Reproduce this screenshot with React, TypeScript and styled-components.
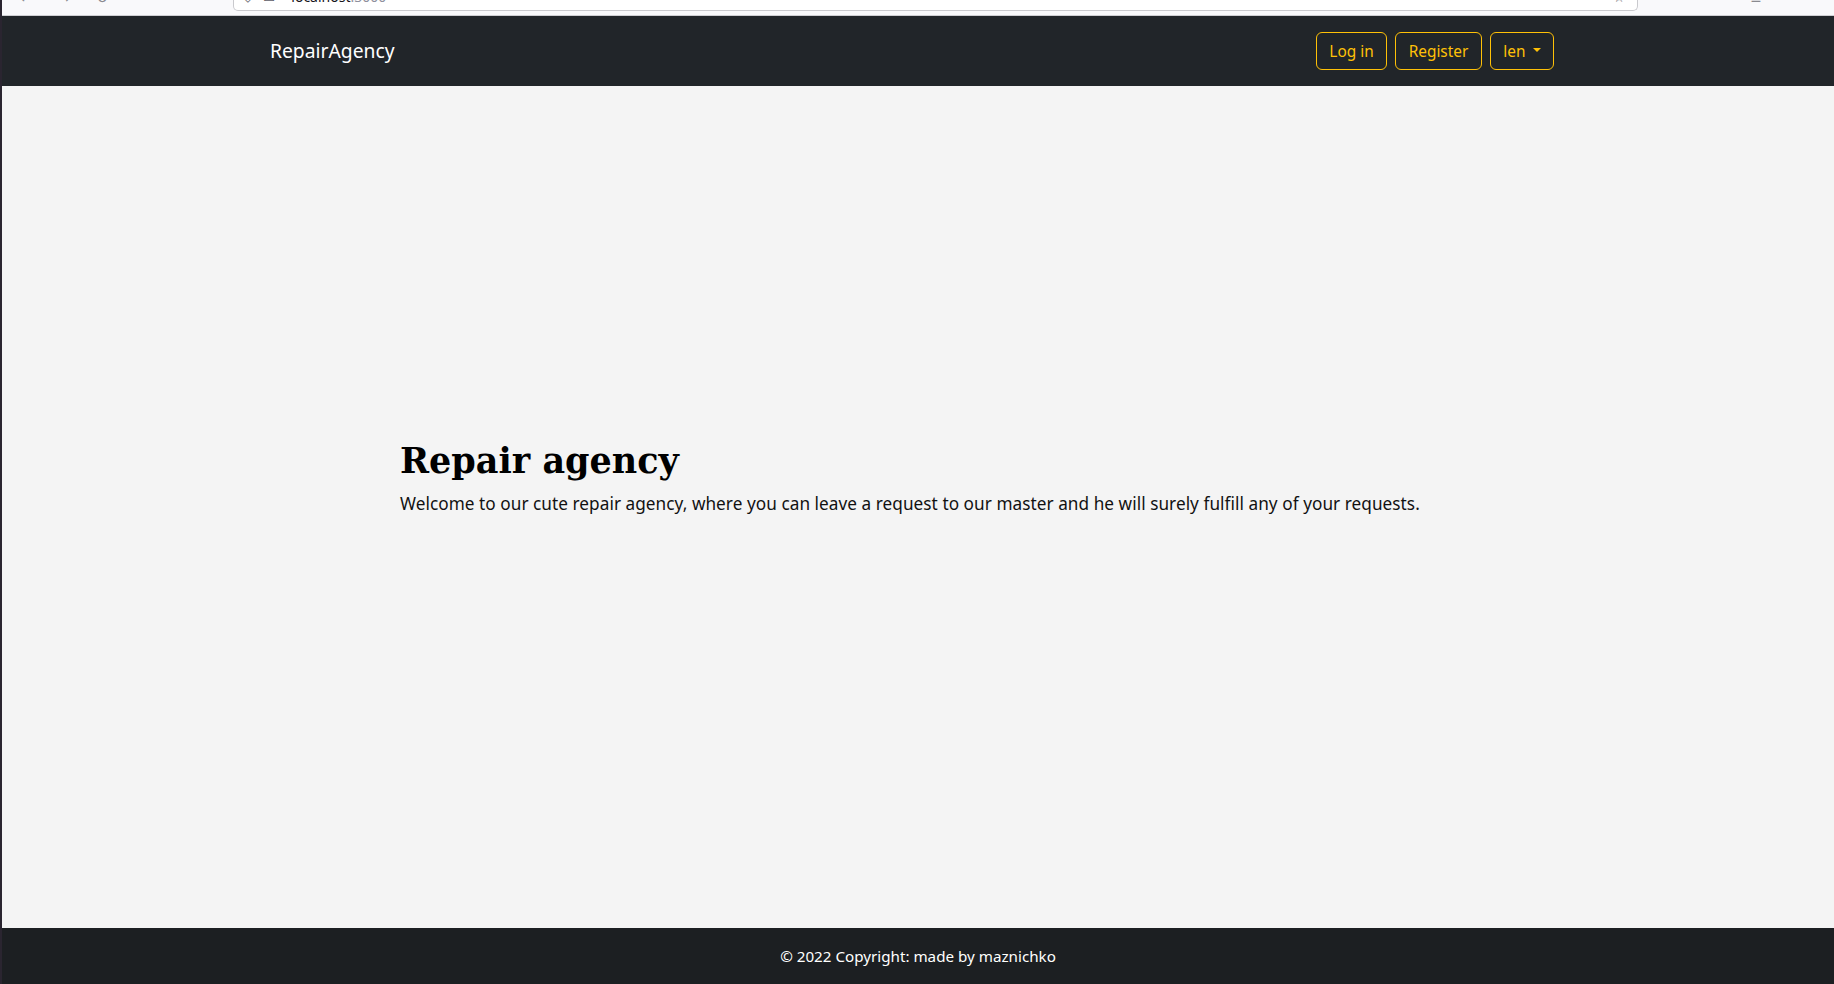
import React from "react";
import styled, { createGlobalStyle } from "styled-components";

const Global = createGlobalStyle`
  html, body { margin: 0; padding: 0; }
  body { font-family: "Noto Sans", "DejaVu Sans", sans-serif; background: #f4f4f4; }
  * { box-sizing: border-box; }
`;

const Page = styled.div`
  display: flex;
  flex-direction: column;
  height: 984px;
  border-left: 2px solid #2a2530;
`;

const Chrome = styled.div`
  height: 16px;
  background: #f9f9fb;
  border-bottom: 1px solid #cfcfd3;
  display: flex;
  align-items: flex-start;
  overflow: hidden;
`;

const ChromeNav = styled.div`
  width: 231px;
  display: flex;
  align-items: flex-start;
  gap: 18px;
  padding-left: 14px;
  height: 8px;
  overflow: hidden;
`;

const ChromeGlyph = styled.span`
  font-family: "DejaVu Sans", sans-serif;
  font-size: 14px;
  line-height: 14px;
  color: #8a8a90;
  margin-top: -9px;
  width: 20px;
  text-align: center;
`;

const ChromeRight = styled.div`
  flex: 1;
  display: flex;
  justify-content: center;
  padding-left: 40px;
  height: 8px;
  overflow: hidden;
`;

const AddressBar = styled.div`
  width: 1405px;
  height: 11px;
  background: #ffffff;
  border: 1px solid #c9c9cd;
  border-top: none;
  border-radius: 0 0 5px 5px;
  display: flex;
  align-items: flex-start;
  gap: 10px;
  padding: 0 12px 0 9px;
  overflow: hidden;
`;

const AddrIcon = styled.span`
  font-family: "DejaVu Sans", sans-serif;
  font-size: 13px;
  line-height: 14px;
  margin-top: -9px;
  color: #5b5b66;
`;

const AddrText = styled.span`
  font-size: 14px;
  line-height: 14px;
  margin-top: -10px;
  margin-left: 6px;
  color: #15141a;
  flex: 1;
  span { color: #8f8f9d; }
`;

const Nav = styled.nav`
  height: 70px;
  background: #212529;
  display: flex;
  align-items: center;
  padding: 0 0 0 268px;
`;

const Brand = styled.a`
  color: #ffffff;
  font-size: 19.3px;
  text-decoration: none;
  margin-right: auto;
  line-height: 1;
`;

const Actions = styled.div`
  display: flex;
  gap: 8px;
  margin-right: 280px;
`;

const OutlineButton = styled.button`
  height: 38px;
  padding: 0 12.5px;
  background: transparent;
  border: 1px solid #ffc107;
  border-radius: 6px;
  color: #ffc107;
  font-family: inherit;
  font-size: 15.4px;
  display: flex;
  align-items: center;
  gap: 7px;
`;

const Caret = styled.span`
  width: 0;
  height: 0;
  border-left: 4px solid transparent;
  border-right: 4px solid transparent;
  border-top: 4px solid #ffc107;
  margin-top: -2px;
`;

const Main = styled.main`
  flex: 1;
  background: #f4f4f4;
  padding: 355px 0 0 398px;
`;

const Title = styled.h1`
  margin: 0 0 10px;
  font-family: "DejaVu Serif", serif;
  font-weight: bold;
  font-size: 35px;
  line-height: 40px;
  color: #000;
`;

const Lead = styled.p`
  margin: 0;
  font-size: 17.2px;
  letter-spacing: 0.05px;
  line-height: 26px;
  color: #111;
`;

const Footer = styled.footer`
  height: 56px;
  background: #1c1f22;
  color: #ffffff;
  display: flex;
  align-items: center;
  justify-content: center;
  font-size: 15.2px;
`;

export default function App() {
  return (
    <>
      <Global />
      <Page>
        <Chrome>
          <ChromeNav>
            <ChromeGlyph>←</ChromeGlyph>
            <ChromeGlyph>→</ChromeGlyph>
            <ChromeGlyph>↻</ChromeGlyph>
          </ChromeNav>
          <AddressBar>
            <AddrIcon>⛉</AddrIcon>
            <AddrIcon>▭</AddrIcon>
            <AddrText>
              localhost<span>:3000</span>
            </AddrText>
            <AddrIcon>☆</AddrIcon>
          </AddressBar>
          <ChromeRight>
            <ChromeGlyph>≡</ChromeGlyph>
          </ChromeRight>
        </Chrome>
        <Nav>
          <Brand href="#">RepairAgency</Brand>
          <Actions>
            <OutlineButton>Log in</OutlineButton>
            <OutlineButton>Register</OutlineButton>
            <OutlineButton>
              len <Caret />
            </OutlineButton>
          </Actions>
        </Nav>
        <Main>
          <Title>Repair agency</Title>
          <Lead>
            Welcome to our cute repair agency, where you can leave a request to our master and he will surely fulfill any of your requests.
          </Lead>
        </Main>
        <Footer>© 2022 Copyright: made by maznichko</Footer>
      </Page>
    </>
  );
}
